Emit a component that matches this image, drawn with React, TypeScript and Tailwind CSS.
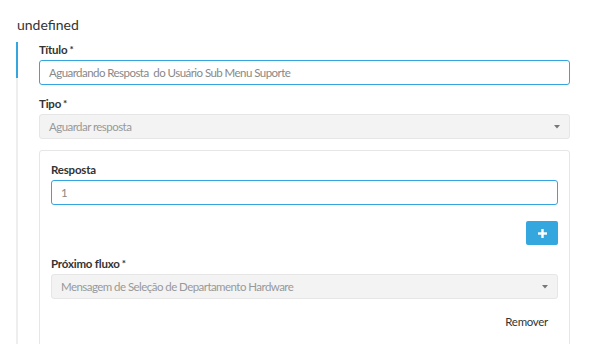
import React from "react";

function Label({ text, req }: { text: string; req?: boolean }) {
  return (
    <div className="mb-[3px] text-[11.5px] leading-[15px] font-bold tracking-[-0.2px] text-[#333]">
      {text}
      {req && <span className="ml-[2px] text-[10px] align-top">*</span>}
    </div>
  );
}

function Caret() {
  return (
    <svg width="6" height="4" viewBox="0 0 6 4" className="shrink-0">
      <path d="M0 0 H6 L3 3.5 Z" fill="#777" />
    </svg>
  );
}

function SelectBox({ value }: { value: string }) {
  return (
    <div className="flex h-[25px] items-center justify-between rounded-[3px] border border-[#e6e6e6] bg-[#f3f3f3] pl-[9px] pr-[9px]">
      <span className="text-[11.5px] tracking-[-0.55px] text-[#999]">{value}</span>
      <Caret />
    </div>
  );
}

function TextBox({ value }: { value: string }) {
  return (
    <div className="flex h-[25px] items-center rounded-[3px] border border-[#34a5de] bg-white pl-[9px]">
      <span className="whitespace-pre text-[11.5px] tracking-[-0.55px] text-[#888]">{value}</span>
    </div>
  );
}

export default function App() {
  return (
    <div className="h-[344px] w-[597px] overflow-hidden bg-white font-['Lato',sans-serif]">
      <div className="pl-[17px] pt-[16px] text-[14px] leading-[18px] text-[#333]">undefined</div>
      <div className="relative ml-[16px] mt-[8px] border-l-2 border-[#eeeeee] pl-[21px] pr-[27px]">
        <div className="absolute left-[-2px] top-0 h-[36px] w-[2px] bg-[#34a5de]" />
        <div className="mb-[11px]">
          <Label text="Título" req />
          <TextBox value="Aguardando Resposta  do Usuário Sub Menu Suporte" />
        </div>
        <div className="mb-[11px]">
          <Label text="Tipo" req />
          <SelectBox value="Aguardar resposta" />
        </div>
        <div className="rounded-[3px] border border-[#e6e6e6] px-[11px] pt-[11px] pb-[40px]">
          <div>
            <Label text="Resposta" />
            <TextBox value="1" />
          </div>
          <div className="mt-[16px] flex justify-end">
            <div className="flex h-[24px] w-[32px] items-center justify-center rounded-[2px] bg-[#34a7df]">
              <svg width="9" height="9" viewBox="0 0 9 9">
                <rect x="3.3" y="0" width="2.4" height="9" fill="#fff" />
                <rect x="0" y="3.3" width="9" height="2.4" fill="#fff" />
              </svg>
            </div>
          </div>
          <div className="mt-[11px]">
            <Label text="Próximo fluxo" req />
            <SelectBox value="Mensagem de Seleção de Departamento Hardware" />
          </div>
          <div className="mt-[15px] flex justify-end pr-[10px]">
            <span className="text-[11.5px] leading-[15px] tracking-[-0.3px] text-[#333]">Remover</span>
          </div>
        </div>
      </div>
    </div>
  );
}
